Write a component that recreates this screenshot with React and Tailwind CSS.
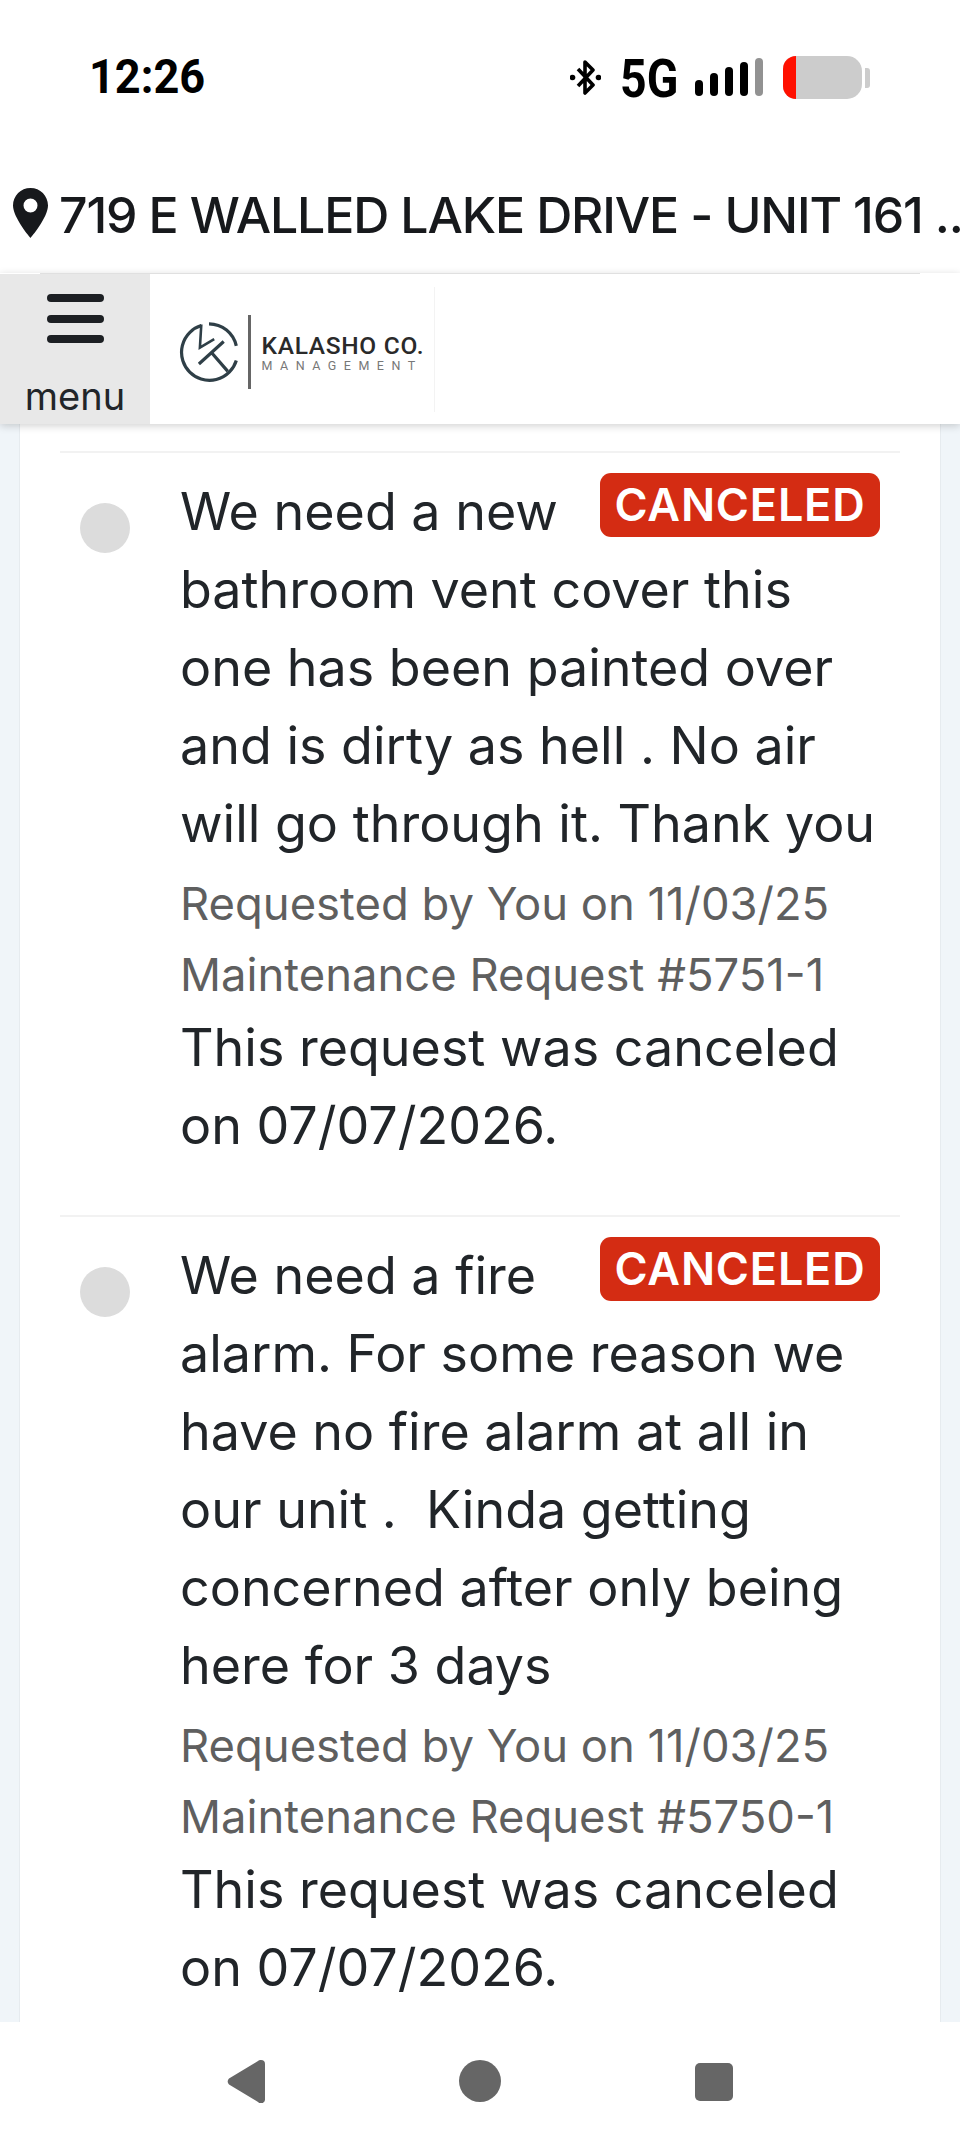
import React from "react";

function Req({ lines, num, pb }) {
  return (
    <div className={"relative border-t-2 border-[#f2f2f2] pl-[120px] pt-[20px] " + pb}>
      <div className="absolute left-[20px] top-[50px] w-[50px] h-[50px] rounded-full bg-[#dcdcdc]"></div>
      <span className="absolute right-[20px] top-[20px] h-[64px] w-[280px] rounded-[11px] bg-[#d42c13] text-white text-[45px] leading-[64px] font-semibold text-center tracking-[0.8px]">CANCELED</span>
      <div className="text-[52px] leading-[78px] text-[#212529] whitespace-pre">
        {lines.map((l) => (
          <div key={l}>{l}</div>
        ))}
      </div>
      <div className="text-[45.4px] leading-[71px] text-[#5f5f5f] mt-[5px]">Requested by You on 11/03/25</div>
      <div className="text-[45.4px] leading-[71px] text-[#5f5f5f] mb-[-1px]">Maintenance Request #{num}</div>
      <div className="text-[52px] leading-[78px] text-[#212529]">This request was canceled</div>
      <div className="text-[52px] leading-[78px] text-[#212529]">on 07/07/2026.</div>
    </div>
  );
}

export default function App() {
  return (
    <div className="w-[960px] h-[2142px] flex flex-col overflow-hidden bg-white font-['Inter',sans-serif]">
      {/* status bar */}
      <div className="h-[180px] shrink-0 flex items-start justify-between pt-[50px] pl-[89px] pr-[90px]">
        <div className="font-['Roboto',sans-serif] font-bold text-[49px] leading-[54px] text-black origin-left scale-x-[0.92]">12:26</div>
        <div className="flex items-start gap-[20px] h-[54px]">
          <svg width="31" height="35" viewBox="0 0 31 35" fill="none" stroke="#000" strokeWidth="3.600" strokeLinejoin="round" className="mt-[10px] mr-[-1px]">
            <path d="M8 9 L23 25 L15 33 V2 L23 10 L8 26" />
            <circle cx="2.500" cy="17.500" r="2.800" fill="#000" stroke="none" />
            <circle cx="28.500" cy="17.500" r="2.800" fill="#000" stroke="none" />
          </svg>
          <span className="w-[55px] font-['Roboto',sans-serif] font-bold text-[54px] leading-[54px] mt-[2px] text-black origin-left scale-x-[0.86]">5G</span>
          <svg width="68" height="38" viewBox="0 0 68 38" className="mt-[8px]">
            <rect x="0" y="22" width="8" height="16" rx="4" fill="#000" />
            <rect x="15" y="15" width="8" height="23" rx="4" fill="#000" />
            <rect x="30" y="9" width="8" height="29" rx="4" fill="#000" />
            <rect x="45" y="4" width="8" height="34" rx="4" fill="#000" />
            <rect x="60" y="0" width="8" height="38" rx="4" fill="#929292" />
          </svg>
          <div className="flex items-center gap-[3px] mt-[6px]">
            <div className="w-[79px] h-[43px] rounded-l-[13px] rounded-r-[15px] bg-[#cccccc] overflow-hidden">
              <div className="w-[13px] h-full bg-[#ff1000]"></div>
            </div>
            <div className="w-[5px] h-[20px] rounded-r-[3px] bg-[#cccccc]"></div>
          </div>
        </div>
      </div>

      {/* address */}
      <div className="h-[93px] shrink-0 flex items-start pl-[13px] pt-[5px] whitespace-nowrap overflow-hidden">
        <svg width="35" height="50" viewBox="0 0 35 50" className="mt-[3px] mr-[11px] shrink-0">
          <path fillRule="evenodd" fill="#17191c" d="M17.500 0C7.800 0 0 7.800 0 17.500 0 29.500 17.500 50 17.500 50S35 29.500 35 17.500C35 7.800 27.200 0 17.500 0Zm0 10.500a7 7 0 1 1 0 14 7 7 0 0 1 0-14Z" />
        </svg>
        <span className="text-[50px] leading-[60px] font-[450] text-[#17191c] tracking-[-1.15px]">719 E WALLED LAKE DRIVE - UNIT 161 ...</span>
      </div>

      {/* header */}
      <div className="relative z-10 h-[151px] shrink-0 flex pt-[1px] bg-white shadow-[0_2px_8px_rgba(0,0,0,0.18)]">
        <div className="absolute top-0 left-[40px] w-[880px] h-[1px] bg-[#e0e0e0]"></div>
        <div className="w-[150px] h-[150px] bg-[#e8e8e8] flex flex-col items-center pt-[20px]">
          <div className="w-[57px] h-[8px] rounded-full bg-[#1c1f23]"></div>
          <div className="w-[57px] h-[8px] rounded-full bg-[#1c1f23] mt-[13px]"></div>
          <div className="w-[57px] h-[8px] rounded-full bg-[#1c1f23] mt-[12px]"></div>
          <div className="text-[38px] leading-[44px] text-[#212529] mt-[31px]">menu</div>
        </div>
        <div className="w-[285px] h-[125px] mt-[13px] border-r border-[#f3f3f3] flex items-start pl-[29px]">
          <svg width="60" height="60" viewBox="0 0 60 60" fill="none" stroke="#2f3f47" strokeWidth="3.200" className="mt-[35px] shrink-0">
            <path d="M30 1.800A28 28 0 0 1 57.300 23.900" />
            <path d="M57.300 38.500A28 28 0 1 1 22.300 3.500" />
            <path d="M22.300 2.500 L20.900 25.600 L35.200 17.100" strokeWidth="2.600" />
            <path d="M19.900 42 L44.700 19.500 M31.800 29.700 L48.800 49.400" />
          </svg>
          <div className="w-[2.500px] h-[74px] bg-[#666] ml-[9px] mt-[28px] shrink-0"></div>
          <div className="ml-[11px] mt-[47px] font-['Roboto',sans-serif]">
            <div className="text-[24.500px] leading-[24px] font-medium text-[#2a2a2a] tracking-[0.7px] whitespace-nowrap">KALASHO CO.</div>
            <div className="text-[12.500px] leading-[12px] mt-[2px] text-[#777] tracking-[7.5px] whitespace-nowrap">MANAGEMENT</div>
          </div>
        </div>
      </div>

      {/* content */}
      <div className="flex-1 min-h-0 overflow-hidden bg-[#f0f5f9] px-[19px]">
        <div className="bg-white h-full px-[40px] pt-[27px] border-x border-[#e6ebef]">
          <Req pb="pb-[50px]" lines={["We need a new", "bathroom vent cover this", "one has been painted over", "and is dirty as hell . No air", "will go through it. Thank you"]} num="5751-1" />
          <Req pb="pb-[50px]" lines={["We need a fire", "alarm. For some reason we", "have no fire alarm at all in", "our unit .  Kinda getting", "concerned after only being", "here for 3 days"]} num="5750-1" />
        </div>
      </div>

      {/* nav */}
      <div className="h-[120px] shrink-0 bg-white flex items-start pt-[38px] pl-[227px] gap-[194px]">
        <svg width="38" height="43" viewBox="0 0 38 43"><path d="M34 0a4 4 0 0 1 4 4v35a4 4 0 0 1-7 3L2 24.500a4.500 4.500 0 0 1 0-6L31 1a4 4 0 0 1 3-1Z" fill="#666" /></svg>
        <div className="w-[42px] h-[42px] rounded-full bg-[#666]"></div>
        <div className="w-[38px] h-[38px] rounded-[5px] bg-[#666] mt-[3px]"></div>
      </div>
    </div>
  );
}
